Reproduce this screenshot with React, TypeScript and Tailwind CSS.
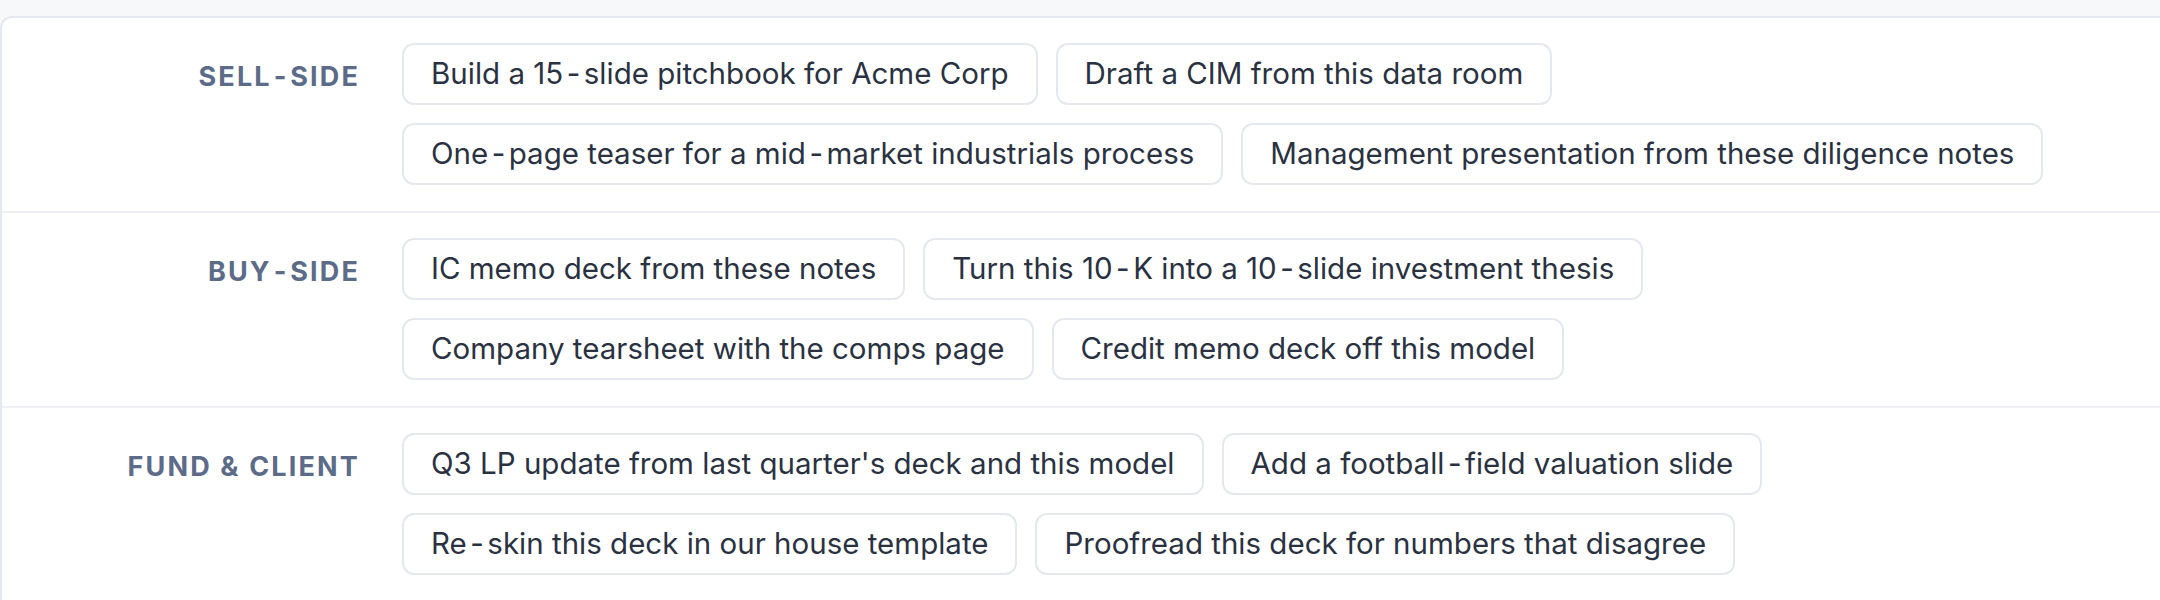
import React from "react";

type Group = {
  label: string;
  rows: string[][];
};

const groups: Group[] = [
  {
    label: "Sell-side",
    rows: [
      ["Build a 15-slide pitchbook for Acme Corp", "Draft a CIM from this data room"],
      [
        "One-page teaser for a mid-market industrials process",
        "Management presentation from these diligence notes",
      ],
    ],
  },
  {
    label: "Buy-side",
    rows: [
      ["IC memo deck from these notes", "Turn this 10-K into a 10-slide investment thesis"],
      ["Company tearsheet with the comps page", "Credit memo deck off this model"],
    ],
  },
  {
    label: "Fund & client",
    rows: [
      ["Q3 LP update from last quarter's deck and this model", "Add a football-field valuation slide"],
      ["Re-skin this deck in our house template", "Proofread this deck for numbers that disagree"],
    ],
  },
];

// hyphens sit a little apart from their neighbours in the design
function Hyphenated({ text, gap }: { text: string; gap: string }) {
  const parts = text.split("-");
  return (
    <>
      {parts.map((p, i) => (
        <React.Fragment key={i}>
          {i > 0 && <span className={gap}>{"\u2011"}</span>}
          {p}
        </React.Fragment>
      ))}
    </>
  );
}

function Chip({ text }: { text: string }) {
  return (
    <button
      type="button"
      className="h-[62px] px-[27px] rounded-[12px] border-2 border-[#e5e8ed] bg-white text-[29.5px] leading-none text-[#2a3242] whitespace-nowrap hover:bg-[#f8f9fb]"
    >
      <Hyphenated text={text} gap="mx-[5px]" />
    </button>
  );
}

export default function App() {
  return (
    <div className="w-[2160px] h-[600px] overflow-hidden bg-[#f7f8fa] pt-[16px] font-['Inter','Noto_Sans',sans-serif]">
      <div className="w-[2240px] h-[600px] bg-white border-2 border-[#e5e8ed] rounded-[12px]">
        {groups.map((group, i) => (
          <div
            key={group.label}
            className={
              i > 0
                ? "flex gap-[42px] pt-[25px] pb-[26px] border-t-2 border-[#eef0f3]"
                : "flex gap-[42px] pt-[25px] pb-[26px]"
            }
          >
            <div className="w-[358px] h-[62px] pt-[7px] flex items-center justify-end shrink-0">
              <span className="text-[27px] font-bold uppercase tracking-[0.08em] text-[#5b6b88]">
                <Hyphenated text={group.label} gap="mx-[2px]" />
              </span>
            </div>
            <div className="flex flex-col gap-[18px]">
              {group.rows.map((row, j) => (
                <div key={j} className="flex gap-[18px]">
                  {row.map((t) => (
                    <Chip key={t} text={t} />
                  ))}
                </div>
              ))}
            </div>
          </div>
        ))}
      </div>
    </div>
  );
}
